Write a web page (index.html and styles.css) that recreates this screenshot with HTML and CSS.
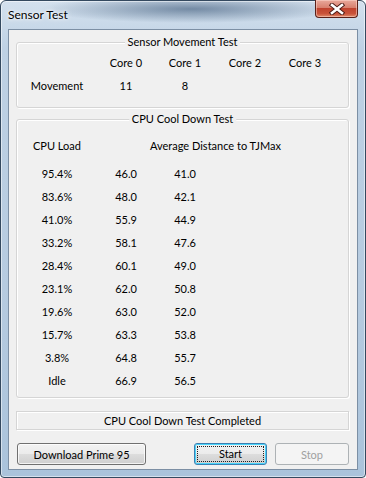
FILE: index.html
```html
<!DOCTYPE HTML>
<html>
	<head>
		<title>Sensor Test</title>
		<meta charset="utf-8">
		<link rel="stylesheet" href="styles.css">
	</head>
	<body>
		<div class="window">
			<div class="titlebar">
				<span class="title">Sensor Test</span>
				<div class="close">
					<svg width="16" height="12" viewBox="0 0 16 12">
						<path d="M3 2 L13 10 M13 2 L3 10" stroke="#4a1a14" stroke-width="4.4" stroke-linecap="square"/>
						<path d="M3 2 L13 10 M13 2 L3 10" stroke="#fff" stroke-width="2.6" stroke-linecap="square"/>
					</svg>
				</div>
			</div>

			<div class="client">
				<div class="group group-move">
					<h2 class="legend">Sensor Movement Test</h2>
					<div class="grid">
						<span></span><span>Core 0</span><span>Core 1</span><span>Core 2</span><span>Core 3</span>
						<span>Movement</span><span>11</span><span>8</span><span></span><span></span>
					</div>
				</div>

				<div class="group group-cool">
					<h2 class="legend">CPU Cool Down Test</h2>
					<div class="grid head">
						<span>CPU Load</span><span class="wide">Average Distance to TJMax</span>
					</div>
					<div class="grid rows">
						<span>95.4%</span><span>46.0</span><span>41.0</span>
						<span>83.6%</span><span>48.0</span><span>42.1</span>
						<span>41.0%</span><span>55.9</span><span>44.9</span>
						<span>33.2%</span><span>58.1</span><span>47.6</span>
						<span>28.4%</span><span>60.1</span><span>49.0</span>
						<span>23.1%</span><span>62.0</span><span>50.8</span>
						<span>19.6%</span><span>63.0</span><span>52.0</span>
						<span>15.7%</span><span>63.3</span><span>53.8</span>
						<span>3.8%</span><span>64.8</span><span>55.7</span>
						<span>Idle</span><span>66.9</span><span>56.5</span>
					</div>
				</div>

				<div class="status">CPU Cool Down Test Completed</div>

				<div class="buttons">
					<button class="btn btn-dl">Download Prime 95</button>
					<button class="btn btn-start"><span>Start</span></button>
					<button class="btn btn-stop" disabled>Stop</button>
				</div>
			</div>
		</div>
	</body>
</html>
```

FILE: styles.css
```css
*{ margin:0; padding:0; box-sizing:border-box;}
body{
	background:#fff;
	font:11px Lato, sans-serif;
	color:#000;
}
.window{
	width:366px;
	height:478px;
	border:1px solid #34495f;
	border-radius:6px 6px 4px 4px;
	background:
		radial-gradient(ellipse 150px 14px at 190px 8px, rgba(40,70,105,0.55), rgba(40,70,105,0)),
		linear-gradient(to bottom, #d4e1ee 0%, #bed1e4 10%, #b6cbe0 60%, #aac3db 100%);
	box-shadow:inset 0 0 0 1px rgba(255,255,255,0.5);
}
.titlebar{
	height:28px;
	display:flex;
	justify-content:space-between;
	align-items:flex-start;
}
.title{
	margin:6px 0 0 7px;
	line-height:16px;
	font-size:12px;
	text-shadow:0 0 6px #fff, 0 0 3px #fff;
}
.close{
	width:43px;
	height:18px;
	margin-right:7px;
	margin-top:-1px;
	border:1px solid #5a2018;
	border-top:none;
	border-radius:0 0 4px 4px;
	background:linear-gradient(to bottom, #e9a99b 0%, #d8806e 45%, #c0432e 50%, #c9533a 80%, #e08a6a 100%);
	box-shadow:inset 0 0 0 1px rgba(255,220,210,0.5);
	display:flex;
	align-items:center;
	justify-content:center;
}
.client{
	width:350px;
	height:441px;
	margin-left:7px;
	border:1px solid #7c8fa4;
	background:#f0f0f0;
	padding:12px 8px 0 7px;
}
.group{
	position:relative;
	border:1px solid #d5d5d5;
	border-radius:3px;
	box-shadow:inset 1px 1px 0 #fff, 1px 1px 0 #fff;
}
.legend{
	position:absolute;
	top:-9px;
	left:50%;
	transform:translateX(-50%);
	font-size:11px;
	font-weight:normal;
	line-height:16px;
	padding:0 3px;
	background:#f0f0f0;
	white-space:nowrap;
}
.grid{
	display:grid;
	grid-template-columns:80px 58px 60px 60px 60px;
	grid-auto-rows:23px;
	align-items:center;
	text-align:center;
}
.rows{
	grid-template-columns:80px 58px 60px;
}
.group-move{
	height:66px;
	padding-top:8px;
}
.group-cool{
	height:279px;
	margin-top:11px;
	padding-top:14px;
}
.head{
	margin-bottom:5px;
}
.head .wide{
	grid-column:2 / span 4;
	text-align:left;
	padding-left:53px;
}
.status{
	margin-top:13px;
	height:19px;
	line-height:17px;
	text-align:center;
	border:1px solid #d5d5d5;
	box-shadow:inset 1px 1px 0 #fff, 1px 1px 0 #fff;
}
.buttons{
	display:flex;
	gap:8px;
	margin-top:13px;
	padding-left:1px;
}
.btn{
	height:22px;
	font:11px Lato, sans-serif;
	color:#000;
	border:1px solid #707070;
	border-radius:3px;
	background:linear-gradient(to bottom, #f2f2f2 0%, #ebebeb 50%, #dddddd 51%, #cfcfcf 100%);
	box-shadow:inset 0 0 0 1px rgba(255,255,255,0.75);
}
.btn-dl{
	width:129px;
}
.btn-start{
	width:73px;
	margin-left:auto;
	border-color:#3c7fb1;
	box-shadow:inset 0 0 0 1px #48d5fb;
	padding:2px;
}
.btn-start span{
	display:block;
	height:100%;
	line-height:14px;
	border:1px dotted #222;
}
.btn-stop{
	width:74px;
	color:#a0a0a0;
	border-color:#adb2b5;
	background:#f4f4f4;
	box-shadow:none;
}
```
